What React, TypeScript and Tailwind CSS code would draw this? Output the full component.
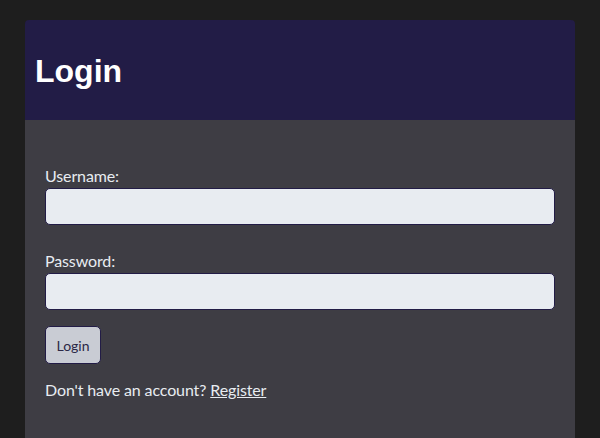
export default function App() {
  return (
    <div className="min-h-screen bg-[#1e1e1e] px-[25px] pt-[20px]">
      <div className="rounded-t-[4px] overflow-hidden">
        <div className="bg-[#221c46] h-[100px] flex items-center px-[10px]">
          <h1
            className="text-[32px] font-bold text-white leading-none pt-[1px]"
            style={{ fontFamily: '"Liberation Sans", Arial, sans-serif' }}
          >
            Login
          </h1>
        </div>
        <div
          className="bg-[#3e3d44] px-[20px] pt-[44px] pb-[40px] text-[16px] text-[#e8ecf1] tracking-[-0.12px]"
          style={{ fontFamily: 'Lato, "Noto Sans", sans-serif' }}
        >
          <form className="flex flex-col" onSubmit={(e) => e.preventDefault()}>
            <label className="leading-[24px]">Username:</label>
            <input
              type="text"
              className="h-[37px] w-full rounded-[5px] border border-[#221c46] bg-[#e8ecf1] px-2 text-[#222] outline-none"
            />
            <label className="leading-[24px] mt-[24px]">Password:</label>
            <input
              type="password"
              className="h-[37px] w-full rounded-[5px] border border-[#221c46] bg-[#e8ecf1] px-2 text-[#222] outline-none"
            />
            <div className="mt-[16px]">
              <button
                type="submit"
                className="h-[38px] w-[56px] rounded-[5px] border border-[#221c46] bg-[#c9ccd4] text-[14px] text-[#2b2846] tracking-normal"
              >
                Login
              </button>
            </div>
            <p className="mt-[14px] leading-[24px]">
              Don't have an account?{' '}
              <a href="#" className="underline">
                Register
              </a>
            </p>
          </form>
        </div>
      </div>
    </div>
  );
}
